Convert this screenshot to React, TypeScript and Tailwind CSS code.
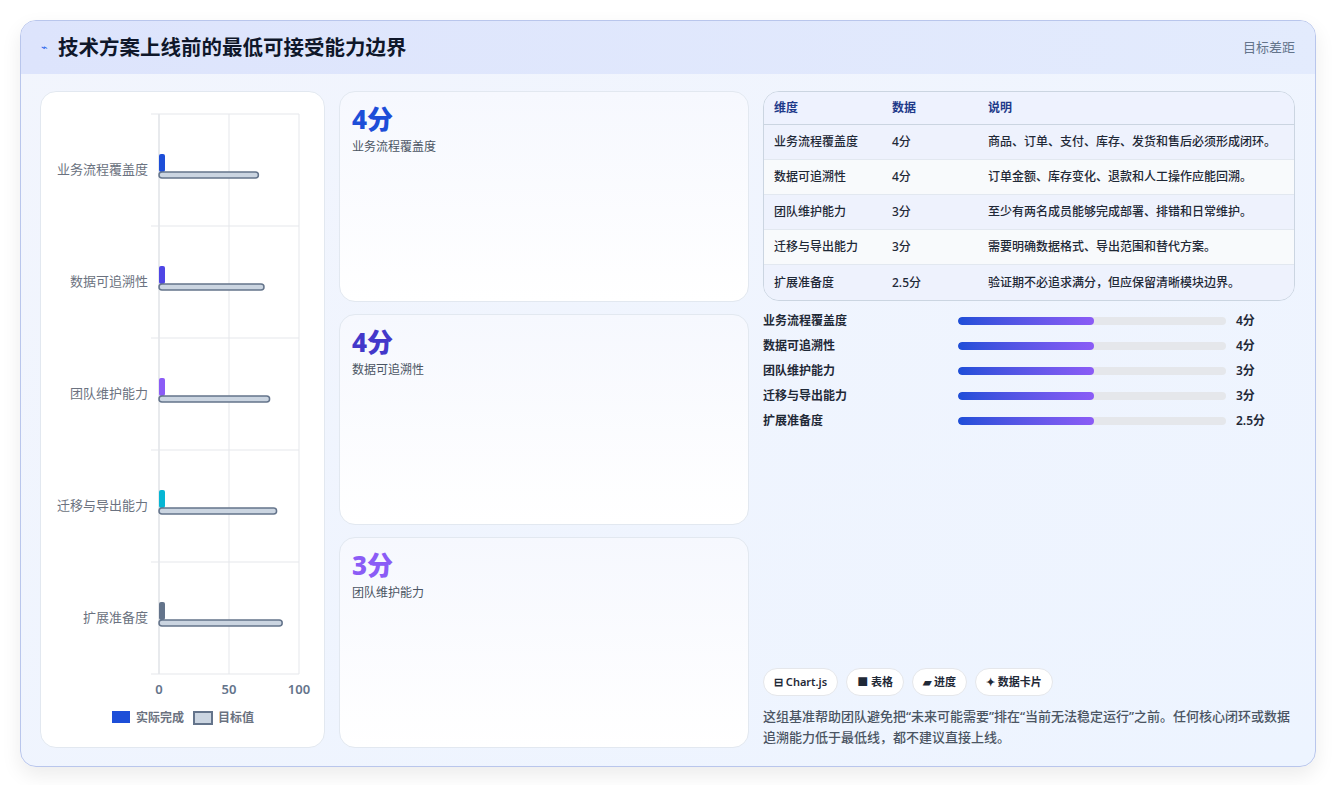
import React from "react";

const rows = [
  { n: "业务流程覆盖度", v: "4分", d: "商品、订单、支付、库存、发货和售后必须形成闭环。", c: "#1d4ed8", t: 71 },
  { n: "数据可追溯性", v: "4分", d: "订单金额、库存变化、退款和人工操作应能回溯。", c: "#4f46e5", t: 75 },
  { n: "团队维护能力", v: "3分", d: "至少有两名成员能够完成部署、排错和日常维护。", c: "#8b5cf6", t: 79 },
  { n: "迁移与导出能力", v: "3分", d: "需要明确数据格式、导出范围和替代方案。", c: "#06b6d4", t: 84 },
  { n: "扩展准备度", v: "2.5分", d: "验证期不必追求满分，但应保留清晰模块边界。", c: "#64748b", t: 88 },
];

function Chart() {
  const x0 = 118, w = 140, top = 22, h = 112;
  return (
    <svg width="284" height="655" className="block">
      {[0, 50, 100].map((g) => (
        <line key={g} x1={x0 + (g / 100) * w} x2={x0 + (g / 100) * w} y1={top} y2={top + 5 * h} stroke={g === 0 ? "#d1d5db" : "#e5e7eb"} />
      ))}
      {[0, 1, 2, 3, 4, 5].map((i) => (
        <line key={i} x1={x0 - 8} x2={x0 + w} y1={top + i * h} y2={top + i * h} stroke="#e5e7eb" />
      ))}
      {rows.map((r, i) => {
        const cy = top + i * h + h / 2;
        return (
          <g key={i}>
            <text x={107} y={cy + 4} textAnchor="end" fontSize="13" fill="#6b7280" fontFamily="'Noto Sans CJK SC', sans-serif">{r.n}</text>
            <rect x={x0} y={cy - 16} width={6} height={18} rx={2} fill={r.c} />
            <rect x={x0} y={cy + 2} width={(r.t / 100) * w} height={6} rx={3} fill="#cbd5e1" stroke="#64748b" strokeWidth={1.5} />
          </g>
        );
      })}
      {[0, 50, 100].map((g) => (
        <text key={g} x={x0 + (g / 100) * w} y={top + 5 * h + 20} textAnchor="middle" fontSize="13" fontWeight="600" fill="#64748b" fontFamily="'Noto Sans', sans-serif">{g}</text>
      ))}
      <rect x={71} y={619} width={18} height={12} fill="#1d4ed8" />
      <text x={95} y={630} fontSize="12" fill="#6b7280" fontWeight="600" fontFamily="'Noto Sans CJK SC', sans-serif">实际完成</text>
      <rect x={153} y={620} width={18} height={12} fill="#cbd5e1" stroke="#64748b" strokeWidth={2} />
      <text x={177} y={630} fontSize="12" fill="#6b7280" fontWeight="600" fontFamily="'Noto Sans CJK SC', sans-serif">目标值</text>
    </svg>
  );
}

function Stat({ v, l, c }: { v: string; l: string; c: string }) {
  return (
    <div className="flex-1 rounded-2xl border border-[#e2e8f0] bg-gradient-to-b from-[#f6f8fe] to-white px-3 py-2.5">
      <div className={`text-[26px] font-extrabold leading-[34px] ${c}`}>{v}</div>
      <div className="text-[12px] text-[#4b5563] mt-0.5">{l}</div>
    </div>
  );
}

export default function App() {
  return (
    <div className="w-[1336px] h-[785px] bg-white p-5 pb-[18px]" style={{ fontFamily: "'Noto Sans', 'Noto Sans CJK SC', sans-serif" }}>
      <div className="h-full rounded-2xl border border-[#b9c6ec] overflow-hidden flex flex-col bg-gradient-to-br from-[#f2f5fd] to-[#edf4ff] shadow-[0_8px_20px_rgba(0,0,0,0.08)]">
        <div className="h-[56px] flex items-center justify-between px-5 bg-gradient-to-r from-[#dde4fc] to-[#e3ebfd]">
          <div className="flex items-center gap-2.5">
            <span className="text-[#2563eb] text-[11px]">⌁</span>
            <span className="text-[20.5px] font-bold text-[#0f172a]">技术方案上线前的最低可接受能力边界</span>
          </div>
          <span className="text-[13px] text-[#64748b]">目标差距</span>
        </div>
        <div className="flex-1 flex gap-[14px] pl-[19px] pr-5 pt-[17px] pb-[18px]">
          <div className="w-[285px] rounded-2xl border border-[#e2e8f0] bg-white">
            <Chart />
          </div>
          <div className="w-[410px] flex flex-col gap-3">
            <Stat v="4分" l="业务流程覆盖度" c="text-[#1d4ed8]" />
            <Stat v="4分" l="数据可追溯性" c="text-[#4338ca]" />
            <Stat v="3分" l="团队维护能力" c="text-[#8b5cf6]" />
          </div>
          <div className="flex-1 flex flex-col">
            <div className="rounded-2xl border border-[#cbd5e1] overflow-hidden text-[12px]">
              <div className="flex h-[33px] items-center bg-[#eef2fe] text-[#1e3a8a] font-semibold border-b border-[#cbd5e1]">
                <div className="w-[128px] pl-2.5">维度</div>
                <div className="w-[96px]">数据</div>
                <div>说明</div>
              </div>
              {rows.map((r, i) => (
                <div key={i} className={`flex h-[35px] items-center text-[#1f2937] font-medium ${i < 4 ? "border-b border-[#e2e8f0]" : ""} ${i % 2 === 0 ? "bg-[#eef2fd]" : "bg-[#f8fafc]"}`}>
                  <div className="w-[128px] pl-2.5">{r.n}</div>
                  <div className="w-[96px]">{r.v}</div>
                  <div>{r.d}</div>
                </div>
              ))}
            </div>
            <div className="flex flex-col gap-[9px] mt-[12px]">
              {rows.map((r, i) => (
                <div key={i} className="flex items-center h-4 text-[12px] font-semibold text-[#1f2937]">
                  <div className="w-[195px]">{r.n}</div>
                  <div className="w-[268px] h-2 rounded-full bg-[#e5e7eb] overflow-hidden">
                    <div className="h-full w-[136px] rounded-full bg-gradient-to-r from-[#1d4ed8] to-[#8b5cf6]" />
                  </div>
                  <div className="ml-2.5">{r.v}</div>
                </div>
              ))}
            </div>
            <div className="mt-auto">
              <div className="flex gap-2 text-[11px] font-semibold text-[#1f2937]">
                {["⊟ Chart.js", "■ 表格", "▰ 进度", "✦ 数据卡片"].map((t) => (
                  <span key={t} className="h-[28px] px-2.5 flex items-center rounded-full bg-white border border-[#e5e7eb]">{t}</span>
                ))}
              </div>
              <p className="mt-2.5 text-[13px] leading-[21px] text-[#4b5563] font-medium">这组基准帮助团队避免把“未来可能需要”排在“当前无法稳定运行”之前。任何核心闭环或数据追溯能力低于最低线，都不建议直接上线。</p>
            </div>
          </div>
        </div>
      </div>
    </div>
  );
}
